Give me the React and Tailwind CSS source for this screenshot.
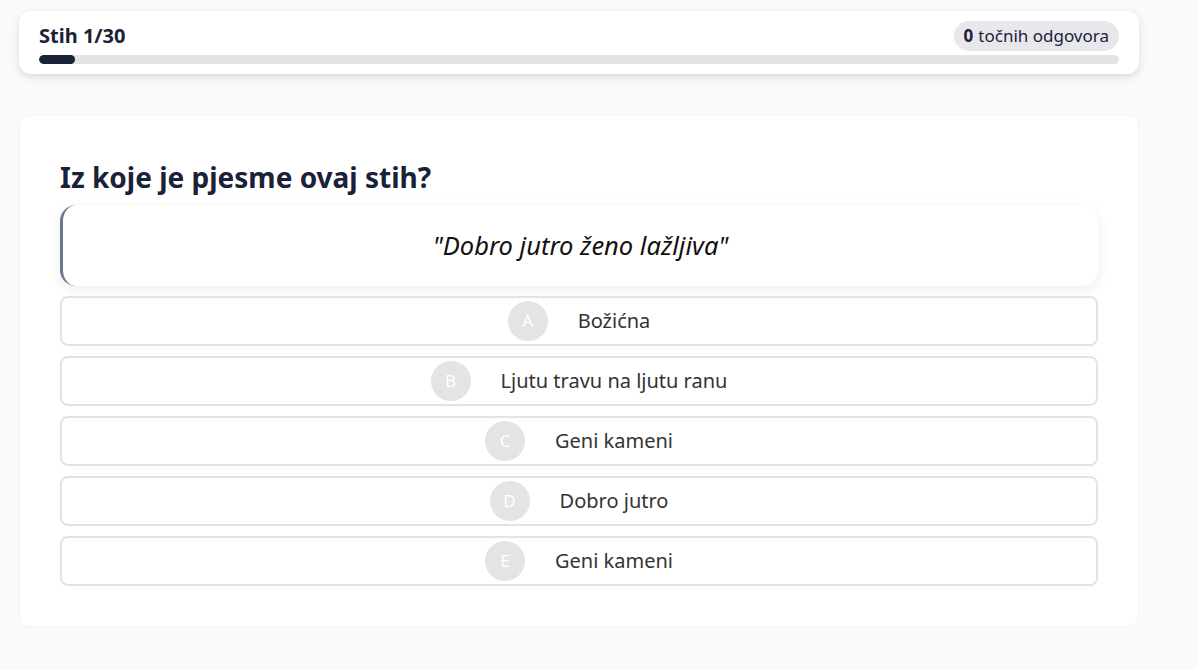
export default function App() {
  const options = [
    ["A", "Božićna"],
    ["B", "Ljutu travu na ljutu ranu"],
    ["C", "Geni kameni"],
    ["D", "Dobro jutro"],
    ["E", "Geni kameni"],
  ];
  return (
    <div
      className="min-h-[670px] bg-[#fafafa] pt-[11px] pl-[19px] w-[1197px]"
      style={{ fontFamily: '"Noto Sans", "Open Sans", sans-serif' }}
    >
      <div className="w-[1120px] bg-white rounded-[12px] shadow-[0_3px_8px_rgba(0,0,0,0.13)] px-5 pt-[9px] pb-[10px]">
        <div className="flex items-center justify-between h-[32px]">
          <span className="text-[20px] font-bold text-[#1a2238]">Stih 1/30</span>
          <span className="rounded-full bg-[#e8e8ec] px-[10px] h-[30px] flex items-center text-[17px] text-[#1a2238]">
            <b className="mr-[5px]">0</b>točnih odgovora
          </span>
        </div>
        <div className="mt-[3px] h-[9px] rounded-full bg-[#e3e3e3] overflow-hidden">
          <div className="h-full w-[36px] bg-[#1a2238] rounded-full" />
        </div>
      </div>

      <div className="mt-[41px] w-[1120px] bg-white rounded-[10px] border border-[#f4f4f4] px-[40px] pt-[41px] pb-[40px]">
        <h1 className="text-[28px] font-bold text-[#1a2238] leading-[40px]">Iz koje je pjesme ovaj stih?</h1>
        <div className="mt-[8px] h-[81px] rounded-[16px] border-l-[3px] border-[#6b7892] bg-white shadow-[0_4px_14px_rgba(0,0,0,0.07)] flex items-center justify-center">
          <span className="text-[25.5px] italic text-[#111]">"Dobro jutro ženo lažljiva"</span>
        </div>
        <div className="mt-[10px] flex flex-col gap-[10px]">
          {options.map(([l, t], i) => (
            <div
              key={i}
              className="h-[50px] rounded-[8px] border-2 border-[#e3e3e3] flex items-center justify-center gap-[30px]"
            >
              <span className="w-[40px] h-[40px] rounded-full bg-[#e4e4e4] text-white text-[17px] flex items-center justify-center">
                {l}
              </span>
              <span className="text-[20px] text-[#333]">{t}</span>
            </div>
          ))}
        </div>
      </div>
    </div>
  );
}
